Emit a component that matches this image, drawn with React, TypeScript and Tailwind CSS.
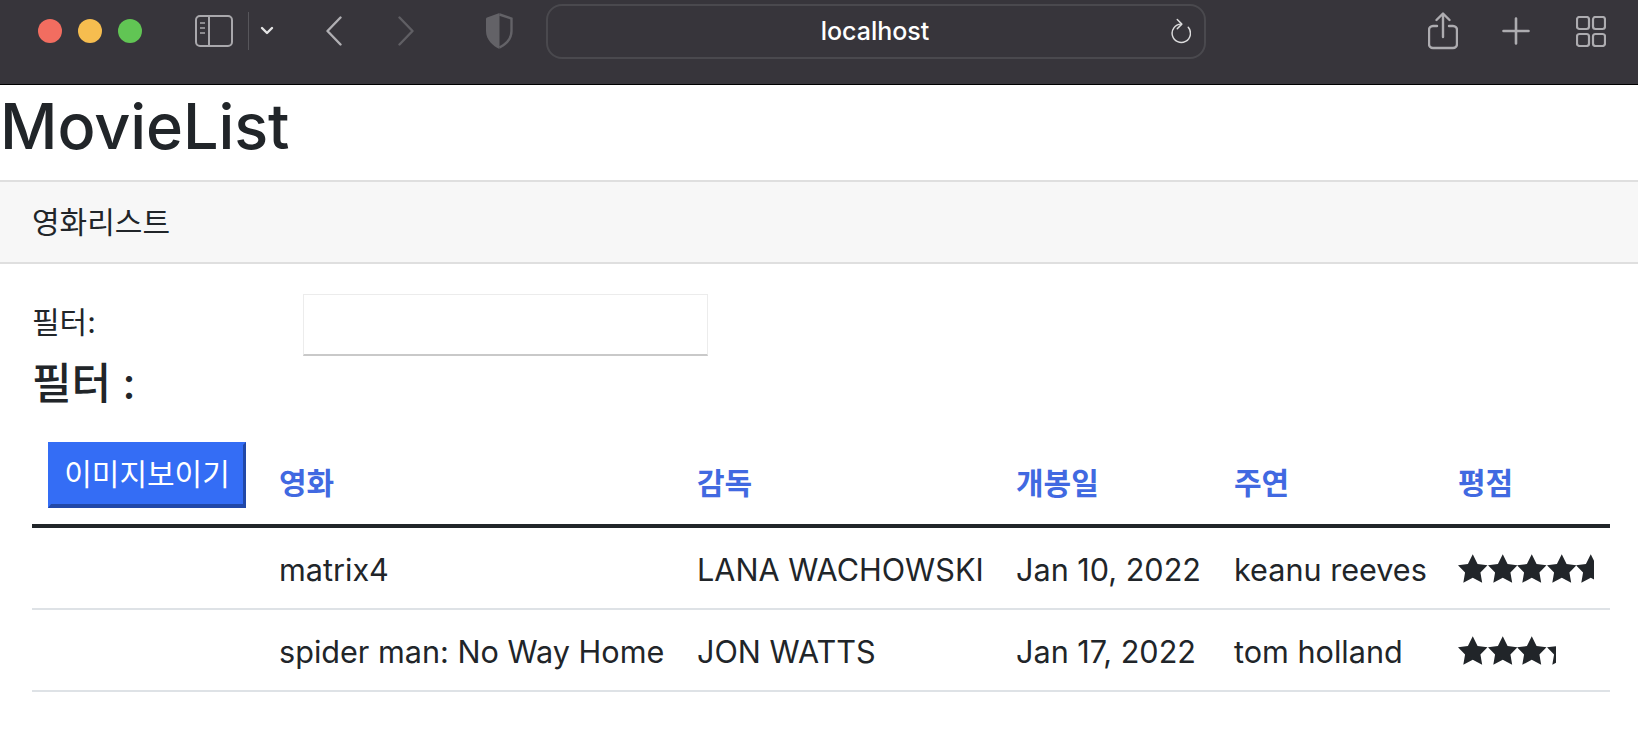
import React from 'react';

const SANS = "font-['Inter','Noto_Sans_CJK_KR',sans-serif]";

const movies = [
  { title: 'matrix4', director: 'LANA WACHOWSKI', date: 'Jan 10, 2022', actor: 'keanu reeves', starWidth: 136 },
  { title: 'spider man: No Way Home', director: 'JON WATTS', date: 'Jan 17, 2022', actor: 'tom holland', starWidth: 98 },
];

const Star = () => (
  <svg viewBox="0 0 30 29" className="w-[29.5px] h-[29px] shrink-0 fill-[#212529]">
    <path d="M15 0l4.900 10 10.100 1.300-7.200 7.300 1.800 10.400-9.600-5-9.600 5 1.800-10.400L0 11.300 10.100 10z" />
  </svg>
);

const Stars = ({ width }: { width: number }) => (
  <div className="flex overflow-hidden" style={{ width }}>
    {[1, 2, 3, 4, 5].map(i => <Star key={i} />)}
  </div>
);

const Toolbar = () => (
  <div className="flex items-center h-[85px] pb-[22px] bg-[#37353b] border-b border-black shrink-0">
    {/* traffic lights */}
    <div className="flex gap-[16px] ml-[38px]">
      <div className="w-[24px] h-[24px] rounded-full bg-[#f26d60]" />
      <div className="w-[24px] h-[24px] rounded-full bg-[#f6bd4f]" />
      <div className="w-[24px] h-[24px] rounded-full bg-[#61c554]" />
    </div>

    <svg viewBox="0 0 38 32" className="w-[38px] h-[32px] ml-[53px] fill-none stroke-[#a9a8ac]" strokeWidth="2">
      <rect x="1" y="1" width="36" height="30" rx="4" />
      <path d="M14 1v30" />
      <path d="M5 8h5M5 13h5M5 18h5" strokeWidth="1.6" />
    </svg>
    <div className="w-px h-[38px] bg-[#57565b] ml-[15px]" />
    <svg viewBox="0 0 14 10" className="w-[14px] h-[10px] ml-[11px] fill-none stroke-[#e4e4e5]" strokeWidth="2.4" strokeLinecap="round" strokeLinejoin="round">
      <path d="M2 2l5 5 5-5" />
    </svg>
    <svg viewBox="0 0 16 30" className="w-[16px] h-[30px] ml-[52px] fill-none stroke-[#b0afb3]" strokeWidth="2.4" strokeLinecap="round" strokeLinejoin="round">
      <path d="M14.5 1.5 1.5 15l13 13.5" />
    </svg>
    <svg viewBox="0 0 16 30" className="w-[16px] h-[30px] ml-[56px] fill-none stroke-[#605f64]" strokeWidth="2.4" strokeLinecap="round" strokeLinejoin="round">
      <path d="M1.5 1.5 14.5 15l-13 13.5" />
    </svg>
    <svg viewBox="0 0 27 36" className="w-[27px] h-[36px] ml-[72px]">
      <path d="M13.5 0 1 4.5C.4 4.7 0 5.300 0 6v12c0 9 7 15 13.500 18z" fill="#636267" />
      <path d="M13.500 1.500 25.500 5.500V18c0 8-6 13.500-12 16.500" fill="none" stroke="#636267" strokeWidth="2.400" />
    </svg>

    {/* address bar */}
    <div className="flex items-center w-[660px] h-[55px] ml-[33px] rounded-[16px] border-2 border-[#4a494e]">
      <span className={`flex-1 pl-[46px] pt-[2px] text-center text-[25px] font-medium text-white ${SANS}`}>localhost</span>
      <svg viewBox="0 0 24 28" className="w-[22px] h-[26px] mx-[13px] fill-none stroke-[#dcdcdd]" strokeWidth="1.6" strokeLinecap="round" strokeLinejoin="round">
        <path d="M13 6.500A10 10 0 1 0 21 10" />
        <path d="M9 1.500 14 6.500 9 11.500" />
      </svg>
    </div>

    <svg viewBox="0 0 30 38" className="w-[30px] h-[38px] ml-[222px] fill-none stroke-[#adacb0]" strokeWidth="2.400" strokeLinecap="round" strokeLinejoin="round">
      <path d="M9 14H5a4 4 0 0 0-4 4v14a4 4 0 0 0 4 4h20a4 4 0 0 0 4-4V18a4 4 0 0 0-4-4h-4" />
      <path d="M15 25V2M8.500 8 15 1.500 21.500 8" />
    </svg>
    <svg viewBox="0 0 28 28" className="w-[28px] h-[28px] ml-[44px] fill-none stroke-[#adacb0]" strokeWidth="2.600" strokeLinecap="round">
      <path d="M14 1.500v25M1.500 14h25" />
    </svg>
    <svg viewBox="0 0 30 31" className="w-[30px] h-[31px] ml-[46px] fill-none stroke-[#adacb0]" strokeWidth="2.200">
      <rect x="1" y="1" width="12" height="12" rx="2.500" />
      <rect x="17" y="1" width="12" height="12" rx="2.500" />
      <rect x="1" y="18" width="12" height="12" rx="2.500" />
      <rect x="17" y="18" width="12" height="12" rx="2.500" />
    </svg>
  </div>
);

export default function App() {
  return (
    <div className={`w-[1638px] h-[744px] overflow-hidden flex flex-col bg-white text-[#212529] ${SANS}`}>
      <Toolbar />

      <h1 className="h-[95px] flex items-center pb-[12px] text-[63px] leading-none font-medium tracking-[-0.1px]">MovieList</h1>

      <div className="h-[84px] flex items-center pl-[32px] bg-[#f7f7f7] border-y-2 border-[#dfdfdf] text-[30px]">
        영화리스트
      </div>

      <div className="px-[32px] pt-[30px]">
        <div className="flex items-center h-[62px]">
          <label className="w-[271px] text-[30px] pb-[6px]">필터:</label>
          <input className="w-[405px] h-[62px] border border-[#ececec] border-b-2 border-b-[#c9c9c9] outline-none" />
        </div>
        <h4 className="text-[43px] font-medium leading-[52px] mt-[1px]">필터 :</h4>

        <table className="w-[1578px] table-fixed border-collapse mt-[31px] text-[30.600px]">
          <colgroup>
            <col className="w-[247px]" />
            <col className="w-[418px]" />
            <col className="w-[319px]" />
            <col className="w-[218px]" />
            <col className="w-[224px]" />
            <col />
          </colgroup>
          <thead>
            <tr className="h-[86px] border-b-4 border-[#212529]">
              <th className="p-0 align-top">
                <button className="block ml-[16px] mt-[2px] w-[198px] h-[66px] bg-[#346df5] text-white text-[30px] font-normal border-[3px] border-t-[#346df5] border-l-[#346df5] border-r-[#2148a8] border-b-[4px] border-b-[#2148a8] whitespace-nowrap">
                  이미지보이기
                </button>
              </th>
              <th className="p-0 text-left align-bottom pb-[18px] text-[30px] font-bold text-[#4169e1]">영화</th>
              <th className="p-0 text-left align-bottom pb-[18px] text-[30px] font-bold text-[#4169e1]">감독</th>
              <th className="p-0 text-left align-bottom pb-[18px] text-[30px] font-bold text-[#4169e1]">개봉일</th>
              <th className="p-0 text-left align-bottom pb-[18px] text-[30px] font-bold text-[#4169e1]">주연</th>
              <th className="p-0 text-left align-bottom pb-[18px] text-[30px] font-bold text-[#4169e1]">평점</th>
            </tr>
          </thead>
          <tbody>
            {movies.map((m, i) => (
              <tr key={m.title} className={`${i === 0 ? 'h-[83px]' : 'h-[82px]'} border-b-2 border-[#dee2e6]`}>
                <td className="p-0" />
                <td className="p-0 pt-[3px] whitespace-nowrap">{m.title}</td>
                <td className="p-0 pt-[3px] whitespace-nowrap">{m.director}</td>
                <td className="p-0 pt-[3px] whitespace-nowrap">{m.date}</td>
                <td className="p-0 pt-[3px] whitespace-nowrap">{m.actor}</td>
                <td className="p-0"><Stars width={m.starWidth} /></td>
              </tr>
            ))}
          </tbody>
        </table>
      </div>
    </div>
  );
}
